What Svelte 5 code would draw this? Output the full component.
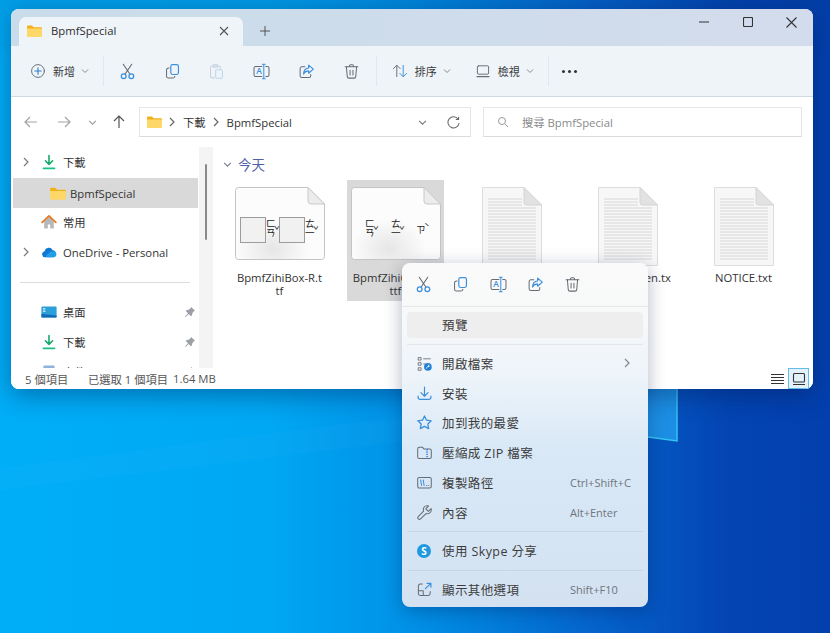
<script>
  const tools = ['cut', 'copy', 'paste', 'rename', 'share', 'trash'];

  const navItems = [
    { label: '下載', icon: 'download', chev: true },
    { label: 'BpmfSpecial', icon: 'folder', selected: true, child: true },
    { label: '常用', icon: 'home' },
    { label: 'OneDrive - Personal', icon: 'cloud', chev: true },
    { divider: true },
    { label: '桌面', icon: 'desktop', pin: true },
    { label: '下載', icon: 'download', pin: true },
    { label: '文件', icon: 'docs', pin: true },
  ];

  const files = [
    { name: 'BpmfZihiBox-R.ttf', kind: 'box' },
    { name: 'BpmfZihiOnly-R.ttf', kind: 'font', selected: true },
    { name: 'LICENSE.txt', kind: 'text' },
    { name: 'LICENSE-open.txt', kind: 'text' },
    { name: 'NOTICE.txt', kind: 'text' },
  ];

  const menuItems = [
    { label: '預覽', hover: true },
    { sep: true },
    { label: '開啟檔案', icon: 'openwith', more: true },
    { label: '安裝', icon: 'install' },
    { label: '加到我的最愛', icon: 'star' },
    { label: '壓縮成 ZIP 檔案', icon: 'zip' },
    { label: '複製路徑', icon: 'path', keys: 'Ctrl+Shift+C' },
    { label: '內容', icon: 'wrench', keys: 'Alt+Enter' },
    { sep: true },
    { label: '使用 Skype 分享', icon: 'skype' },
    { sep: true },
    { label: '顯示其他選項', icon: 'external', keys: 'Shift+F10' },
  ];

  // horizontal rules of the txt thumbnails
  const ruleRows = Array.from({ length: 21 }, (_, i) => 12 + i * 3);
</script>

{#snippet chevDown(size = 8, color = '#8a8a8a')}
  <svg class="ico" width={size} height={size} viewBox="0 0 8 8" fill="none" stroke={color} stroke-width="1">
    <path d="M1 2.5 4 5.5 7 2.5" />
  </svg>
{/snippet}

{#snippet chevRight(color = '#7a7a7a')}
  <svg class="ico" width="8" height="10" viewBox="0 0 8 10" fill="none" stroke={color} stroke-width="1.2">
    <path d="M2 1 6 5 2 9" />
  </svg>
{/snippet}

{#snippet folder(w = 16)}
  <svg class="ico" width={w} height={w * 0.8} viewBox="0 0 20 16">
    <path d="M0 2a1.5 1.5 0 0 1 1.5-1.5h5L9 3H18.500a1.500 1.500 0 0 1 1.500 1.500V7H0Z" fill="#f2b01e" />
    <path d="M0 4.500H18.500A1.500 1.500 0 0 1 20 6v8.500A1.500 1.500 0 0 1 18.500 16H1.500A1.500 1.500 0 0 1 0 14.500Z" fill="#fdd768" />
  </svg>
{/snippet}

{#snippet icon(name, size = 18)}
  <svg class="ico" width={size} height={size} viewBox="0 0 20 20" fill="none" stroke="#666c73" stroke-width="1.2" stroke-linecap="round" stroke-linejoin="round">
    {#if name === 'cut'}
      <path d="M5 1.500 12.800 13M15 1.500 7.200 13" stroke="#5e646b" />
      <circle cx="5.500" cy="15.500" r="2.800" stroke="#3d8fdc" stroke-width="1.500" />
      <circle cx="14.500" cy="15.500" r="2.800" stroke="#3d8fdc" stroke-width="1.500" />
    {:else if name === 'copy'}
      <rect x="8" y="2" width="9" height="11.500" rx="2.200" stroke="#3d8fdc" stroke-width="1.400" />
      <path d="M6 6H5.200A2.200 2.200 0 0 0 3 8.200v7.300a2.200 2.200 0 0 0 2.200 2.200h5.300a2.200 2.200 0 0 0 2.200-2.200" />
    {:else if name === 'paste'}
      <path d="M7 17.500H4.500a1.500 1.500 0 0 1-1.500-1.500V5a1.500 1.500 0 0 1 1.500-1.500H13A1.500 1.500 0 0 1 14.500 5v2" stroke="#c6d2de" />
      <rect x="6" y="2" width="5.500" height="3" rx="1" stroke="#c6d2de" />
      <rect x="9" y="8" width="8" height="10" rx="1.500" stroke="#bcd6ec" />
    {:else if name === 'rename'}
      <path d="M10.500 4H3A1.800 1.800 0 0 0 1.200 5.800v8.400A1.800 1.800 0 0 0 3 16H10.500M15 4h2A1.800 1.800 0 0 1 18.800 5.800v8.400A1.800 1.800 0 0 1 17 16H15" />
      <path d="M12.700 2v16M11 1.500h3.400M11 18.500h3.400" stroke="#3d8fdc" />
      <text x="3.800" y="13.400" class="glyph" fill="#3d8fdc" stroke="none">A</text>
    {:else if name === 'share'}
      <path d="M8 4.500H4.500A2 2 0 0 0 2.500 6.500v8.500a2 2 0 0 0 2 2H13a2 2 0 0 0 2-2v-1.500" />
      <path d="M12.500 2.500 18 7.200l-5.500 4.800V9.300C9.500 9.300 7.800 10.500 6.500 13c.2-4.500 2.600-6.900 6-7.100Z" stroke="#3d8fdc" stroke-width="1.400" />
    {:else if name === 'trash'}
      <path d="M2.500 4.500h15M7.500 4.500V3.700A1.700 1.700 0 0 1 9.200 2h1.600a1.700 1.700 0 0 1 1.700 1.700v.8" />
      <path d="M4 4.500 5 16a2 2 0 0 0 2 1.800h6A2 2 0 0 0 15 16l1-11.500" />
      <path d="M8.300 8.500v5.500M11.700 8.500v5.500" />
    {:else if name === 'sort'}
      <path d="M6 17V3M1.800 7 6 2.800 10.200 7" />
      <path d="M14 3v14M9.800 13 14 17.200 18.200 13" stroke="#3d8fdc" />
    {:else if name === 'view'}
      <rect x="3" y="3.500" width="14" height="10.500" rx="1.500" />
      <path d="M2.500 17h15" stroke-width="1.400" />
    {:else if name === 'plus'}
      <circle cx="10" cy="10" r="8" />
      <path d="M10 6v8M6 10h8" stroke="#2d7fd0" stroke-width="1.400" />
    {:else if name === 'openwith'}
      <path d="M3 3h3v3H3ZM3 9h3v3H3ZM3 15h3v3H3ZM9 4.500h8M9 10.500h2" stroke-width="1" />
      <circle cx="14" cy="14" r="4.500" fill="#1f7fd6" stroke="none" />
      <path d="M12.200 15.600c.4-1.800 1.500-2.600 3.300-2.600M14.300 11.800l1.400 1.200-1.400 1.200" stroke="#fff" stroke-width="0.900" />
    {:else if name === 'install'}
      <path d="M10 2.500v10.500M5.800 9 10 13.200 14.200 9" stroke="#3d8fdc" stroke-width="1.400" />
      <path d="M2.500 13v1.500a2.500 2.500 0 0 0 2.500 2.500h10a2.500 2.500 0 0 0 2.500-2.500V13" stroke="#3d8fdc" stroke-width="1.400" />
    {:else if name === 'star'}
      <path d="M10 2.300 12.400 7.300l5.500.7-4 3.800 1 5.400L10 14.600l-4.900 2.600 1-5.400-4-3.800 5.500-.7Z" stroke="#3d8fdc" stroke-width="1.500" />
    {:else if name === 'zip'}
      <path d="M2 5.500A1.800 1.800 0 0 1 3.800 3.700h3.700L9.500 6H16.200A1.800 1.800 0 0 1 18 7.800v7.400A1.800 1.800 0 0 1 16.200 17H3.800A1.800 1.800 0 0 1 2 15.200Z" />
      <path d="M13 6v11" stroke="#3d8fdc" stroke-width="2" stroke-dasharray="1.500 1.200" stroke-linecap="butt" />
    {:else if name === 'path'}
      <rect x="2" y="4" width="16" height="12.500" rx="2" />
      <path d="M5.500 7 6.500 13.500M8.500 7 9.500 13.500" stroke="#3d8fdc" />
      <path d="M12.500 13.500h.2M15 13.500h.2" />
    {:else if name === 'wrench'}
      <path d="M17.800 5.400 14.500 8.700 11.500 5.700 14.800 2.400C12.300 1.400 9.500 2.700 8.800 5.300 8.500 6.400 8.600 7.400 9 8.400L2.600 14.800A2 2 0 0 0 5.400 17.600L11.800 11.200C14.700 12.200 17.600 10.400 18 7.300 18.100 6.600 18 6 17.800 5.400Z" />
    {:else if name === 'external'}
      <path d="M7.500 3.500H5A2.200 2.200 0 0 0 2.800 5.700v9.100A2.200 2.200 0 0 0 5 17h9.500a2.200 2.200 0 0 0 2.200-2.200V12.500" />
      <path d="M2.800 11.500h5.700v5.500" />
      <path d="M11 9 17.500 2.800M13 2.800h4.500V7.300" stroke="#3d8fdc" stroke-width="1.400" />
    {/if}
  </svg>
{/snippet}

{#snippet navIcon(name)}
  <svg class="ico" width="16" height="16" viewBox="0 0 20 20" fill="none" stroke-linecap="round" stroke-linejoin="round">
    {#if name === 'download'}
      <path d="M10 2v11M5.500 8.500 10 13l4.500-4.500" stroke="#17a86b" stroke-width="2" />
      <path d="M3 18h14" stroke="#17c08a" stroke-width="2" />
    {:else if name === 'folder'}
      <path d="M0 5a1.500 1.500 0 0 1 1.500-1.500h5L9 6h9.500A1.500 1.500 0 0 1 20 7.500V10H0Z" fill="#f2b01e" />
      <path d="M0 7.500h18.500A1.500 1.500 0 0 1 20 9v8A1.500 1.500 0 0 1 18.500 18.500H1.500A1.500 1.500 0 0 1 0 17Z" fill="#fdd768" />
    {:else if name === 'home'}
      <path d="M4 9.500V18h4.500v-5h3v5H16V9.500L10 4Z" fill="#b5b9bd" />
      <path d="M1.500 10.500 10 2.500l8.500 8" stroke="#e27a2a" stroke-width="2.200" />
    {:else if name === 'cloud'}
      <path d="M5 16.500a3.800 3.800 0 0 1-.6-7.500 5.500 5.500 0 0 1 10.200-1.300A4.500 4.500 0 0 1 15.500 16.500Z" fill="#0f78d4" />
      <path d="M7 16.500h9a3.500 3.500 0 0 0 1-6.800C14 8 9.800 9.300 9 12.500A2.500 2.500 0 0 0 7 16.500Z" fill="#1f9fe8" />
    {:else if name === 'desktop'}
      <rect x="0.500" y="3" width="19" height="14" rx="1.500" fill="#2a9fd8" />
      <path d="M0.500 12.500 19.500 14.500V15.500A1.500 1.500 0 0 1 18 17H2A1.500 1.500 0 0 1 0.500 15.500Z" fill="#1468b8" />
      <path d="M3 6h2M3 9h2" stroke="#dff2fb" stroke-width="1.500" />
    {:else if name === 'docs'}
      <rect x="3" y="2" width="14" height="17" rx="1" fill="#8fb4dc" />
    {/if}
  </svg>
{/snippet}

{#snippet pin()}
  <svg class="ico" width="12" height="12" viewBox="0 0 12 12" fill="#9aa0a5">
    <path d="M7.200 1 11 4.800 9.900 5.300 8.300 7.300 8 9.300 6.900 10.200 4.700 8 1.500 11 1 10.500 4 7.300 1.800 5.100 2.700 4 4.700 3.700 6.700 2.100Z" />
  </svg>
{/snippet}

{#snippet thumb(kind)}
  {#if kind === 'text'}
    <svg width="60" height="79" viewBox="0 0 60 79">
      <path d="M.5.5H42L59.500 18V78.500H.5Z" fill="#f7f7f7" stroke="#dcdcdc" />
      {#each ruleRows as y}
        <path d="M6 {y}H{y < 20 ? 40 : 54}" stroke="#d6d6d6" />
      {/each}
      <path d="M42 .5V15.500A2.500 2.500 0 0 0 44.500 18H59.500Z" fill="#e2e2e2" stroke="#d4d4d4" />
    </svg>
  {:else}
    <svg width="90" height="73" viewBox="0 0 90 73">
      <defs>
        <radialGradient id="page{kind}" cx="0.42" cy="0.85" r="0.42">
          <stop offset="0" stop-color="#e6e6e6" />
          <stop offset="1" stop-color="#fcfcfc" />
        </radialGradient>
      </defs>
      <path d="M3.500 .5H73L89.500 17V69.500a3 3 0 0 1-3 3H3.500a3 3 0 0 1-3-3V3.500a3 3 0 0 1 3-3Z" fill="url(#page{kind})" stroke="#c4c4c4" />
      <path d="M73 .5V14A3 3 0 0 0 76 17H89.500Z" fill="#ececec" stroke="#c9c9c9" />
      {#if kind === 'box'}
        <rect x="5.500" y="30.500" width="25" height="25" fill="#f1f1f1" stroke="#9c9c9c" />
        <rect x="44.500" y="30.500" width="25" height="25" fill="#f1f1f1" stroke="#9c9c9c" />
        <text class="bopo" x="31" y="40">ㄈ</text>
        <text class="bopo" x="31" y="49">ㄢ</text>
        <text class="bopo" x="39" y="47">ˇ</text>
        <text class="bopo" x="70" y="40">ㄊ</text>
        <text class="bopo" x="70" y="49">一</text>
        <text class="bopo" x="78" y="47">ˇ</text>
      {:else}
        <text class="bopo" x="14" y="40">ㄈ</text>
        <text class="bopo" x="14" y="49">ㄢ</text>
        <text class="bopo" x="22" y="47">ˇ</text>
        <text class="bopo" x="40" y="40">ㄊ</text>
        <text class="bopo" x="40" y="49">一</text>
        <text class="bopo" x="48" y="47">ˇ</text>
        <text class="bopo" x="65" y="46">ㄗ</text>
        <text class="bopo" x="73" y="44">ˋ</text>
      {/if}
    </svg>
  {/if}
{/snippet}

<div class="desktop">
  <svg class="logo-pane" width="830" height="633" viewBox="0 0 830 633">
    <path d="M0 468 415 415V440L0 490Z" fill="#fff" opacity="0.02" />
    <path d="M600 380H677V441L600 430Z" fill="#1c8fe4" />
    <path d="M677 380V441L648 437" fill="none" stroke="#33c4f0" stroke-width="1.500" />
  </svg>

  <div class="window">
    <div class="titlebar">
      <div class="tab">
        {@render folder(15)}
        <span class="tab-title">BpmfSpecial</span>
        <svg class="tab-close" width="10" height="10" viewBox="0 0 10 10" stroke="#555" stroke-width="1.100"><path d="M1 1 9 9M9 1 1 9" /></svg>
      </div>
      <svg class="tab-new" width="10" height="10" viewBox="0 0 10 10" stroke="#555" stroke-width="1"><path d="M5 0V10M0 5H10" /></svg>
      <div class="win-controls">
        <span class="win-btn"><svg width="10" height="10" viewBox="0 0 10 10" stroke="#333" stroke-width="1.200"><path d="M0 5H10" /></svg></span>
        <span class="win-btn"><svg width="10" height="10" viewBox="0 0 10 10" fill="none" stroke="#333" stroke-width="1.100"><rect x=".5" y=".5" width="9" height="9" rx="1" /></svg></span>
        <span class="win-btn"><svg width="11" height="11" viewBox="0 0 11 11" stroke="#333" stroke-width="1.100"><path d="M.5 .5 10.500 10.500M10.500 .5 .5 10.500" /></svg></span>
      </div>
    </div>

    <div class="toolbar">
      <div class="tbtn first">
        {@render icon('plus', 16)}
        <span>新增</span>
        {@render chevDown()}
      </div>
      <span class="tb-divider lead"></span>
      {#each tools as t}
        <span class="tool">{@render icon(t, 17)}</span>
      {/each}
      <span class="tb-divider near"></span>
      <div class="tbtn sort">
        {@render icon('sort', 16)}
        <span>排序</span>
        {@render chevDown()}
      </div>
      <div class="tbtn views">
        {@render icon('view', 16)}
        <span>檢視</span>
        {@render chevDown()}
      </div>
      <span class="tb-divider"></span>
      <span class="dots"><i></i><i></i><i></i></span>
    </div>

    <div class="navbar">
      <svg class="nav-arrow" width="16" height="16" viewBox="0 0 16 16" fill="none" stroke="#a0a4a8" stroke-width="1.200"><path d="M14 8H2M7 3 2 8l5 5" /></svg>
      <svg class="nav-arrow fwd" width="16" height="16" viewBox="0 0 16 16" fill="none" stroke="#a0a4a8" stroke-width="1.200"><path d="M2 8H14M9 3l5 5-5 5" /></svg>
      <span class="nav-down">{@render chevDown(9, '#9a9ea2')}</span>
      <svg class="nav-arrow up" width="16" height="16" viewBox="0 0 16 16" fill="none" stroke="#555" stroke-width="1.200"><path d="M8 14V2M3 7l5-5 5 5" /></svg>
      <div class="address">
        {@render folder(15)}
        <span class="crumb-sep">{@render chevRight('#666')}</span>
        <span>下載</span>
        <span class="crumb-sep">{@render chevRight('#666')}</span>
        <span>BpmfSpecial</span>
        <span class="addr-down">{@render chevDown(9, '#777')}</span>
        <svg class="refresh" width="13" height="13" viewBox="0 0 14 14" fill="none" stroke="#666" stroke-width="1.100"><path d="M12 3.500A6 6 0 1 0 13 7.500M12.500 .8V3.800H9.500" /></svg>
      </div>
      <div class="search">
        <svg width="12" height="12" viewBox="0 0 12 12" fill="none" stroke="#999" stroke-width="1"><circle cx="5" cy="5" r="3.500" /><path d="M7.700 7.700 11 11" /></svg>
        <span>搜尋 BpmfSpecial</span>
      </div>
    </div>

    <div class="body">
      <nav class="sidebar">
        {#each navItems as n}
          {#if n.divider}
            <div class="side-divider"></div>
          {:else}
            <div class="side-row" class:selected={n.selected} class:child={n.child}>
              <span class="side-chev">{#if n.chev}{@render chevRight()}{/if}</span>
              <span class="side-icon">{@render navIcon(n.icon)}</span>
              <span class="side-label">{n.label}</span>
              {#if n.pin}<span class="side-pin">{@render pin()}</span>{/if}
            </div>
          {/if}
        {/each}
      </nav>
      <div class="scroll-strip"><span class="thumb"></span></div>
      <main class="content">
        <div class="group-head">
          {@render chevDown(9, '#7a7f90')}
          <span>今天</span>
        </div>
        <div class="tiles">
          {#each files as f}
            <div class="tile" class:selected={f.selected}>
              <div class="tile-thumb">{@render thumb(f.kind)}</div>
              <div class="tile-name">{f.name}</div>
            </div>
          {/each}
        </div>
      </main>
    </div>

    <div class="statusbar">
      <span class="count">5 個項目</span>
      <span class="sel">已選取 1 個項目</span>
      <span>1.64 MB</span>
      <span class="view-list">
        <svg width="13" height="11" viewBox="0 0 13 11" stroke="#333" stroke-width="1"><path d="M0 1.500H13M0 4.500H13M0 7.500H13M0 10.500H13" /></svg>
      </span>
      <span class="view-tile">
        <svg width="14" height="14" viewBox="0 0 14 14" fill="none" stroke="#333" stroke-width="1.100"><rect x="1.500" y="1.500" width="11" height="8.500" rx="1" /><path d="M1 12.500H13" /></svg>
      </span>
    </div>
  </div>

  <div class="menu">
    <div class="menu-tools">
      {#each tools.filter((t) => t !== 'paste') as t}
        <span class="menu-tool">{@render icon(t, 17)}</span>
      {/each}
    </div>
    <div class="menu-list">
      {#each menuItems as m}
        {#if m.sep}
          <div class="menu-sep"></div>
        {:else}
          <div class="menu-item" class:hover={m.hover}>
            <span class="menu-icon">
              {#if m.icon === 'skype'}
                <span class="skype">S</span>
              {:else if m.icon}
                {@render icon(m.icon, 17)}
              {/if}
            </span>
            <span class="menu-label">{m.label}</span>
            {#if m.keys}<span class="menu-keys">{m.keys}</span>{/if}
            {#if m.more}<span class="menu-more">{@render chevRight('#808890')}</span>{/if}
          </div>
        {/if}
      {/each}
    </div>
  </div>
</div>

<style>
  :global(body) {
    margin: 0;
  }

  .desktop {
    position: relative;
    width: 830px;
    height: 633px;
    overflow: hidden;
    font-family: "Open Sans", "Noto Sans CJK TC", sans-serif;
    font-size: 11.300px;
    color: #333;
    background:
      linear-gradient(180deg, rgba(0, 50, 120, 0.12) 0, rgba(0, 50, 120, 0) 60px),
      linear-gradient(90deg, #00aef7 0, #00a8f3 32%, #0090e6 50%, #0563cc 72%, #0344b2 88%, #0340ae 100%);
  }

  .logo-pane {
    position: absolute;
    inset: 0;
  }

  .ico {
    display: block;
    flex: none;
  }

  .glyph {
    font-size: 10px;
    font-weight: 600;
    font-family: "Open Sans", sans-serif;
  }

  .bopo {
    font-size: 9.500px;
    fill: #222;
    font-family: "Noto Sans CJK TC", sans-serif;
  }

  .window {
    position: absolute;
    left: 11px;
    top: 9px;
    width: 802px;
    height: 380px;
    display: flex;
    flex-direction: column;
    background: #fff;
    border-radius: 8px;
    overflow: hidden;
    box-shadow: 0 6px 26px rgba(0, 20, 70, 0.4);
  }

  .titlebar {
    height: 37px;
    flex: none;
    display: flex;
    align-items: flex-end;
    background: linear-gradient(90deg, #c9dcea, #d3dcec);
  }

  .tab {
    width: 224px;
    height: 29px;
    margin-left: 8px;
    box-sizing: border-box;
    padding: 0 14px 2px 8px;
    display: flex;
    align-items: center;
    gap: 9px;
    background: #eff4f9;
    border-radius: 7px 7px 0 0;
    color: #2e2e2e;
  }

  .tab-title {
    flex: 1;
  }

  .tab-new {
    margin: 0 0 10px 17px;
  }

  .win-controls {
    margin-left: auto;
    align-self: flex-start;
    display: flex;
  }

  .win-btn {
    width: 43.500px;
    height: 26px;
    display: flex;
    align-items: center;
    justify-content: center;
  }

  .toolbar {
    height: 50px;
    flex: none;
    display: flex;
    align-items: center;
    background: #eff4f9;
    border-bottom: 1px solid #d0dae4;
  }

  .tbtn {
    display: flex;
    align-items: center;
    gap: 7px;
    margin-left: 24px;
    color: #3a3a3a;
  }

  .tbtn.first {
    margin-left: 19px;
  }

  .tbtn.sort {
    margin-left: 15px;
  }

  .tbtn span {
    width: 22px;
    margin-right: -1px;
    white-space: nowrap;
    font-size: 11px;
  }

  .tb-divider {
    width: 1px;
    height: 30px;
    margin-left: 14px;
    background: #e1e7ee;
  }

  .tb-divider.lead {
    margin-right: 1px;
  }

  .tb-divider.near {
    margin-left: 2px;
  }

  .tool {
    width: 44.800px;
    display: flex;
    justify-content: center;
  }

  .dots {
    display: flex;
    gap: 3px;
    margin-left: 13.500px;
  }

  .dots i {
    width: 3px;
    height: 3px;
    border-radius: 50%;
    background: #333;
  }

  .navbar {
    height: 50px;
    flex: none;
    display: flex;
    align-items: center;
    padding-left: 12px;
    color: #333;
  }

  .nav-arrow.fwd {
    margin-left: 17px;
  }

  .nav-down {
    margin-left: 16px;
  }

  .nav-arrow.up {
    margin-left: 14px;
  }

  .address,
  .search {
    height: 30px;
    box-sizing: border-box;
    display: flex;
    align-items: center;
    border: 1px solid #e6e6e6;
    border-bottom-color: #dcdcdc;
    margin-left: 12px;
  }

  .address {
    width: 332px;
    padding-left: 7px;
  }

  .crumb-sep {
    margin: 0 7px 0 6px;
  }

  .addr-down {
    margin-left: auto;
  }

  .refresh {
    margin: 0 10px 0 20px;
  }

  .search {
    width: 319px;
    padding-left: 13px;
    gap: 13px;
    color: #8a8a8a;
  }

  .body {
    flex: 1;
    min-height: 0;
    display: flex;
    overflow: hidden;
  }

  .sidebar {
    width: 188px;
    flex: none;
    padding-left: 2px;
    box-sizing: border-box;
    color: #333;
  }

  .side-row {
    width: 185px;
    height: 30px;
    display: flex;
    align-items: center;
    box-sizing: border-box;
    padding-left: 9px;
  }

  .side-row.selected {
    background: #d9d9d9;
    position: relative;
    top: 1px;
  }

  .side-chev {
    width: 8px;
    flex: none;
  }

  .side-icon {
    margin-left: 11px;
    width: 16px;
    flex: none;
  }

  .side-row.child .side-icon {
    margin-left: 20px;
  }

  .side-label {
    margin-left: 6px;
  }

  .side-row.child .side-label {
    margin-left: 4px;
  }

  .side-pin {
    margin-left: auto;
    margin-right: 2px;
  }

  .side-divider {
    height: 30px;
    position: relative;
  }

  .side-divider::after {
    content: "";
    position: absolute;
    left: 7px;
    right: 9px;
    top: 15px;
    height: 1px;
    background: #dcdcdc;
  }

  .scroll-strip {
    width: 14px;
    flex: none;
    background: #f4f4f4;
    position: relative;
  }

  .thumb {
    position: absolute;
    left: 6px;
    top: 17px;
    width: 2px;
    height: 76px;
    border-radius: 1px;
    background: #8a8a8a;
  }

  .content {
    flex: 1;
    padding: 7px 0 0 18px;
    min-width: 0;
  }

  .group-head {
    height: 20px;
    margin: 0 0 6px -8px;
    display: flex;
    align-items: center;
    gap: 6px;
    font-size: 13.500px;
    color: #4f60a8;
  }

  .tiles {
    display: flex;
    gap: 19px;
  }

  .tile {
    width: 97px;
    height: 121px;
    box-sizing: border-box;
    padding-top: 7px;
    text-align: center;
  }

  .tile.selected {
    background: #d9d9d9;
  }

  .tile-thumb {
    height: 78px;
    display: flex;
    justify-content: center;
  }

  .tile-name {
    margin-top: 6px;
    padding: 0 5px;
    line-height: 13px;
    word-break: break-all;
    color: #333;
  }

  .statusbar {
    height: 21px;
    flex: none;
    display: flex;
    align-items: center;
    padding-left: 14px;
    color: #555;
    background: #fff;
  }

  .count {
    width: 63px;
  }

  .sel {
    width: 85px;
  }

  .view-list {
    margin-left: auto;
    display: flex;
    margin-right: 4px;
  }

  .view-tile {
    width: 19px;
    height: 19px;
    margin-right: 4px;
    display: flex;
    align-items: center;
    justify-content: center;
    background: #e2f1fa;
    border: 1px solid #62bdeb;
  }

  .menu {
    position: absolute;
    left: 402px;
    top: 263px;
    width: 246px;
    height: 344px;
    box-sizing: border-box;
    border-radius: 8px;
    overflow: hidden;
    color: #3c3c3c;
    font-size: 12.500px;
    background: linear-gradient(180deg, #fafafa 0, #f7f8f9 60px, #eef4fa 110px, #d8e8f6 190px, #d6e5f4 280px, #d3e1f1 344px);
    box-shadow: 0 4px 18px rgba(0, 20, 70, 0.3);
  }

  .menu-tools {
    height: 43px;
    display: flex;
    align-items: center;
    padding-left: 3px;
    border-bottom: 1px solid #e8e8e8;
  }

  .menu-tool {
    width: 37.300px;
    display: flex;
    justify-content: center;
  }

  .menu-list {
    display: flex;
    flex-direction: column;
    padding: 3px 5px 0;
  }

  .menu-item {
    height: 25.800px;
    margin: 2px 0;
    display: flex;
    align-items: center;
    border-radius: 4px;
  }

  .menu-item.hover {
    background: #eeeeee;
  }

  .menu-icon {
    width: 35px;
    flex: none;
    display: flex;
    justify-content: center;
    padding-right: 1px;
    box-sizing: border-box;
  }

  .menu-label {
    flex: 1;
    letter-spacing: 0.400px;
  }

  .menu-keys {
    width: 73px;
    flex: none;
    font-size: 11px;
    color: #6f757b;
  }

  .menu-more {
    margin-right: 12px;
  }

  .menu-sep {
    height: 1px;
    margin: 3.850px 0;
    background: rgba(0, 0, 0, 0.06);
  }

  .skype {
    width: 14px;
    height: 14px;
    border-radius: 50%;
    display: flex;
    align-items: center;
    justify-content: center;
    background: #1f9ae0;
    color: #fff;
    font-size: 10px;
    font-weight: 700;
  }
</style>
